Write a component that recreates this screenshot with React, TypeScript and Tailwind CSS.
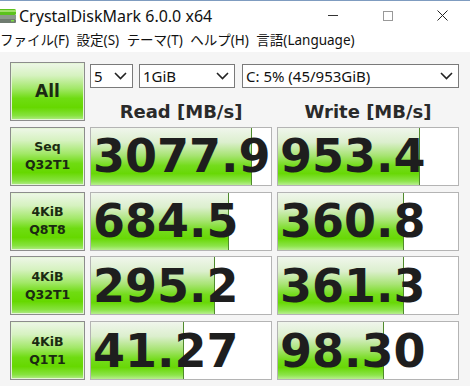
import React from 'react';

const rows = [
  { top: 'Seq', bottom: 'Q32T1', read: '3077.9', readBar: 161, write: '953.4', writeBar: 142 },
  { top: '4KiB', bottom: 'Q8T8', read: '684.5', readBar: 138, write: '360.8', writeBar: 126 },
  { top: '4KiB', bottom: 'Q32T1', read: '295.2', readBar: 124, write: '361.3', writeBar: 126 },
  { top: '4KiB', bottom: 'Q1T1', read: '41.27', readBar: 93, write: '98.30', writeBar: 106 },
];

const uiFont = "font-['Noto_Sans','Noto_Sans_CJK_JP',sans-serif]";
const boldFont = "font-['DejaVu_Sans',sans-serif] font-bold";

const Chevron = () => (
  <svg width="13" height="8" viewBox="0 0 13 8" className="shrink-0">
    <path d="M1 1l5.5 5.5L12 1" fill="none" stroke="#222" strokeWidth="1.6" />
  </svg>
);

const Select = ({ label, className }: { label: string; className: string }) => (
  <div
    className={`flex h-[24px] items-center justify-between border border-[#7a7a7a] bg-white pl-[3px] pr-[5px] text-[15px] text-[#111] ${uiFont} ${className}`}
  >
    <span className="leading-none">{label}</span>
    <Chevron />
  </div>
);

const TestButton = ({ children }: { children: React.ReactNode }) => (
  <div
    className={`flex h-full flex-col items-center justify-center border border-[#8c8c8c] bg-[linear-gradient(to_bottom,#eef7e8_0%,#d6f2c0_22%,#a2e868_45%,#6fdc12_62%,#66d800_78%,#86e23e_92%,#b4ec8c_100%)] text-[#1b2a12] shadow-[inset_0_0_0_1px_#e4f6d6] ${boldFont}`}
  >
    {children}
  </div>
);

const ResultCell = ({ value, bar }: { value: string; bar: number }) => (
  <div className="relative h-full overflow-hidden border border-[#b4b4b4] bg-white">
    <div
      className="absolute inset-y-0 left-0 border-r border-[#4f8a2c] bg-[linear-gradient(to_bottom,#f0f6ec_0%,#dcefce_25%,#a8e474_48%,#74dc1c_66%,#68d806_80%,#8ce44a_93%,#b8ee90_100%)]"
      style={{ width: bar }}
    />
    <div
      className={`relative flex h-full items-center pl-[2px] text-[46px] leading-none text-[#1e1e1e] ${boldFont}`}
    >
      {value}
    </div>
  </div>
);

export default function App() {
  return (
    <div className="h-[386px] w-[470px] overflow-hidden bg-[#f5f5f5]">
      {/* title bar */}
      <div className={`flex h-[30px] items-center border-t border-[#7f9cc0] bg-white ${uiFont}`}>
        <svg width="20" height="18" viewBox="0 0 20 18" className="ml-[-2px] shrink-0">
          <rect x="1" y="2" width="17" height="6" rx="1.5" fill="#5cc21e" />
          <rect x="1" y="3" width="17" height="2" fill="#9fe06a" />
          <rect x="1" y="8" width="17" height="4" fill="#8c9a8c" />
          <rect x="1" y="12" width="17" height="4" rx="1" fill="#6f7b70" />
          <rect x="13" y="13" width="3" height="1.5" fill="#7ce040" />
        </svg>
        <span className="ml-[1px] text-[16px] leading-none text-[#111]">CrystalDiskMark 6.0.0 x64</span>
        <div className="ml-auto flex items-center">
          <div className="flex w-[55px] justify-center">
            <div className="h-px w-[10px] bg-[#333]" />
          </div>
          <div className="flex w-[55px] justify-center">
            <div className="h-[10px] w-[10px] border border-[#999]" />
          </div>
          <div className="flex w-[55px] justify-center">
            <svg width="11" height="11" viewBox="0 0 11 11">
              <path d="M0.5 0.5l10 10M10.5 0.5l-10 10" stroke="#222" strokeWidth="1" />
            </svg>
          </div>
        </div>
      </div>

      {/* menu bar */}
      <div
        className={`flex h-[22px] items-center gap-[7.5px] bg-white text-[13.5px] leading-none text-[#111] ${uiFont}`}
      >
        <span>ファイル(F)</span>
        <span>設定(S)</span>
        <span>テーマ(T)</span>
        <span>ヘルプ(H)</span>
        <span>言語(Language)</span>
      </div>

      {/* results */}
      <div className="grid grid-cols-[75px_182px_182px] grid-rows-[59px_59px_59px_59px_59px] gap-x-[5px] gap-y-[5.75px] pl-[10px] pt-[10px]">
        <TestButton>
          <span className="text-[17px] leading-none">All</span>
        </TestButton>
        <div className="col-span-2 flex flex-col">
          <div className="mt-[2px] flex">
            <Select label="5" className="w-[43px]" />
            <Select label="1GiB" className="ml-[6px] w-[96px]" />
            <Select label="C: 5% (45/953GiB)" className="ml-[7px] w-[217px]" />
          </div>
          <div className={`mt-[15px] grid grid-cols-[182px_182px] gap-x-[5px] text-[18px] leading-none text-[#2a2a2a] ${boldFont}`}>
            <span className="text-center">Read [MB/s]</span>
            <span className="text-center">Write [MB/s]</span>
          </div>
        </div>

        {rows.map((r, i) => (
          <React.Fragment key={i}>
            <TestButton>
              <span className="text-[12.5px] leading-[18px]">{r.top}</span>
              <span className="text-[12.5px] leading-[18px]">{r.bottom}</span>
            </TestButton>
            <ResultCell value={r.read} bar={r.readBar} />
            <ResultCell value={r.write} bar={r.writeBar} />
          </React.Fragment>
        ))}
      </div>
    </div>
  );
}
